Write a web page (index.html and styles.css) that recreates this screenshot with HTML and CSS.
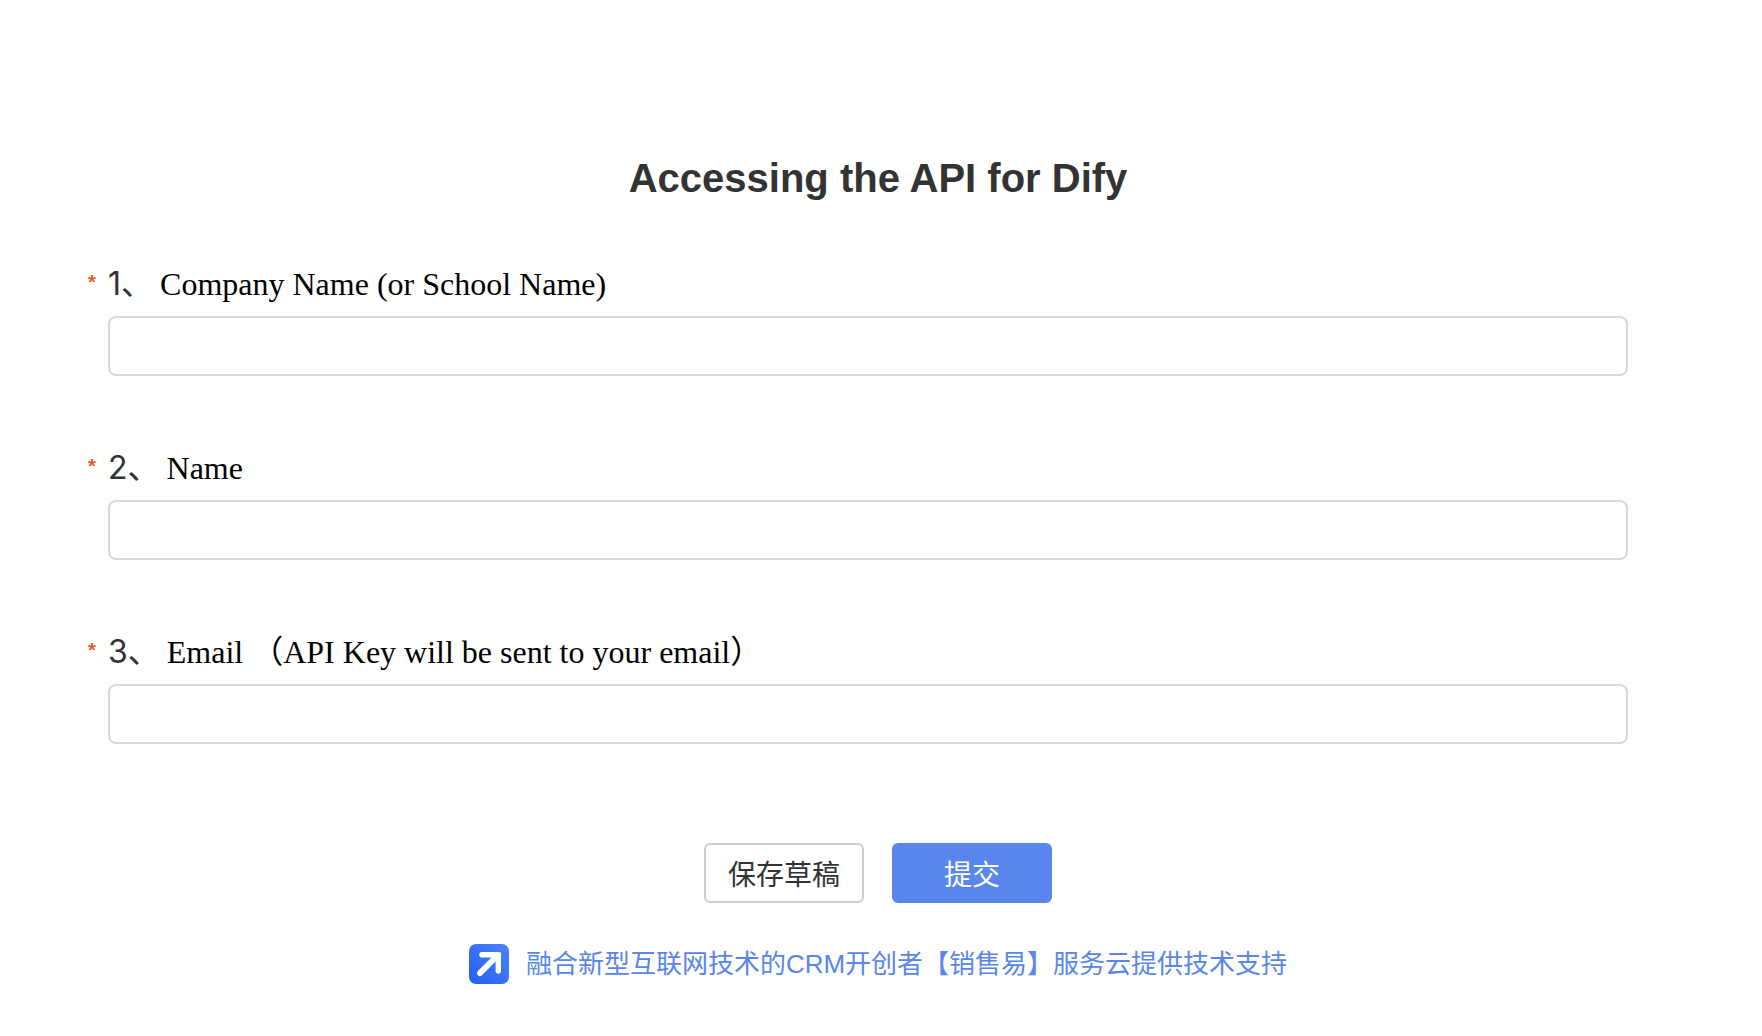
FILE: index.html
```html
<!DOCTYPE html>
<html lang="zh-CN">
<head>
<meta charset="utf-8">
<title>Accessing the API for Dify</title>
<meta name="viewport" content="width=device-width, initial-scale=1">
<link rel="stylesheet" href="styles.css">
</head>
<body>
<main class="page">
  <h1 class="title">Accessing the API for Dify</h1>
  <form class="form">
    <div class="field">
      <label class="label" for="company"><span class="required">*</span><span class="number">1、</span><span class="question">Company Name (or School Name)</span></label>
      <input class="input" id="company" type="text" required>
    </div>
    <div class="field">
      <label class="label" for="name"><span class="required">*</span><span class="number">2、</span><span class="question">Name</span></label>
      <input class="input" id="name" type="text" required>
    </div>
    <div class="field">
      <label class="label" for="email"><span class="required">*</span><span class="number">3、</span><span class="question">Email （API Key will be sent to your email）</span></label>
      <input class="input" id="email" type="email" required>
    </div>
    <div class="actions">
      <button class="button" type="button">保存草稿</button>
      <button class="button button-primary" type="submit">提交</button>
    </div>
  </form>
  <footer class="footer">
    <a class="support" href="#">
      <svg class="logo" viewBox="0 0 40 40" aria-hidden="true">
        <defs>
          <linearGradient id="logo-fill" x1="0" y1="1" x2="1" y2="0">
            <stop offset="0" stop-color="#2560ee"/>
            <stop offset="1" stop-color="#4a82fc"/>
          </linearGradient>
        </defs>
        <rect width="40" height="40" rx="7" fill="url(#logo-fill)"/>
        <path d="M13 8H30.500Q32 8 32 9.500V27a2.700 2.700 0 0 1-5.400 0V17.400L13 31.200a2.900 2.900 0 0 1-4.100-4.100L22.400 13.600H13a2.800 2.800 0 0 1 0-5.600Z" fill="#fff"/>
      </svg>
      <span>融合新型互联网技术的CRM开创者【销售易】服务云提供技术支持</span>
    </a>
  </footer>
</main>
</body>
</html>
```
FILE: styles.css
```css
* {
  box-sizing: border-box;
}

body {
  margin: 0;
  background: #fff;
  color: #333;
  font-family: "Liberation Sans", "Noto Sans CJK SC", sans-serif;
}

.page {
  padding: 154px 6px 40px 0;
}

.title {
  margin: 0 0 58px;
  font-size: 40px;
  line-height: 48px;
  text-align: center;
}

.form {
  display: flex;
  flex-direction: column;
  gap: 68px;
}

.field {
  padding: 0 128px 0 108px;
}

.label {
  display: flex;
  align-items: flex-start;
  height: 48px;
  margin: 0 0 8px -20px;
  font-size: 32px;
  line-height: 48px;
}

.required {
  width: 20px;
  color: #f0592b;
  font-size: 20px;
  font-weight: bold;
  line-height: 44px;
}

.number {
  margin-right: 7px;
  font-family: Inter, "Noto Sans CJK SC", sans-serif;
}

.question {
  color: #000;
  font-family: "Liberation Serif", "Noto Sans CJK SC", serif;
}

.input {
  display: block;
  width: 100%;
  height: 60px;
  padding: 0 16px;
  border: 2px solid #d9d9d9;
  border-radius: 8px;
  background: #fff;
  font: inherit;
  font-size: 28px;
}

.actions {
  display: flex;
  justify-content: center;
  gap: 28px;
  padding-top: 31px;
}

.button {
  width: 160px;
  height: 60px;
  padding: 0;
  border: 2px solid #ccc;
  border-radius: 6px;
  background: #fff;
  color: #333;
  font: inherit;
  font-size: 28px;
}

.button-primary {
  border-color: #5886ec;
  background: #5886ec;
  color: #fff;
}

.footer {
  display: flex;
  justify-content: center;
  margin-top: 41px;
}

.support {
  display: flex;
  align-items: center;
  gap: 17px;
  color: #5886ec;
  font-size: 26px;
  line-height: 40px;
  text-decoration: none;
}

.logo {
  width: 40px;
  height: 40px;
}
```
